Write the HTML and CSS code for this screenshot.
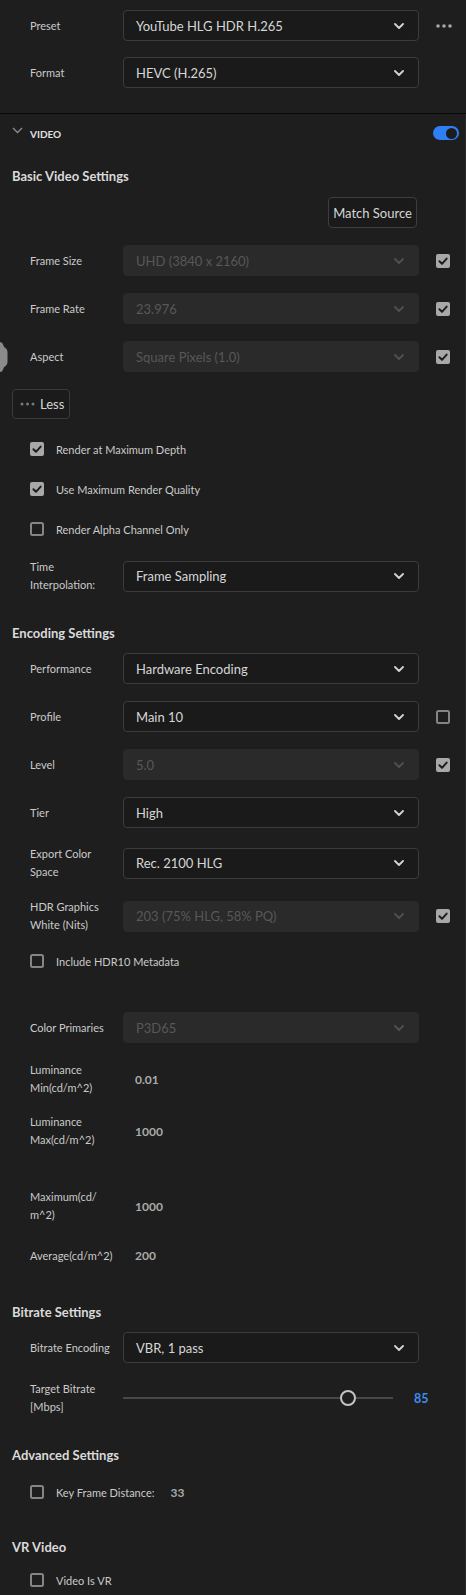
FILE: index.html
```html
<!DOCTYPE html>
<html lang="en">
<head>
<meta charset="utf-8">
<title>Export Settings</title>
<link rel="stylesheet" href="styles.css">
</head>
<body>
<header class="top">
  <div class="row">
    <div class="label">Preset</div>
    <div class="select"><span>YouTube HLG HDR H.265</span><svg class="chev" viewBox="0 0 10 6"><polyline points="1,1 5,5 9,1"/></svg></div>
    <svg class="more" viewBox="0 0 16 4"><circle cx="2" cy="2" r="1.8"/><circle cx="8" cy="2" r="1.8"/><circle cx="14" cy="2" r="1.8"/></svg>
  </div>
  <div class="row">
    <div class="label">Format</div>
    <div class="select"><span>HEVC (H.265)</span><svg class="chev" viewBox="0 0 10 6"><polyline points="1,1 5,5 9,1"/></svg></div>
  </div>
</header>

<main class="panel">
  <div class="section-header">
    <svg class="caret" viewBox="0 0 11 7"><polyline points="1,1 5.5,5.5 10,1"/></svg>
    <span class="section-title">VIDEO</span>
    <span class="toggle"><span class="knob"></span></span>
  </div>

  <h2 class="heading mt-16">Basic Video Settings</h2>
  <div class="btnrow"><button class="btn">Match Source</button></div>

  <div class="group mt-17">
    <div class="row">
      <div class="label">Frame Size</div>
      <div class="select disabled"><span>UHD (3840 x 2160)</span><svg class="chev" viewBox="0 0 10 6"><polyline points="1,1 5,5 9,1"/></svg></div>
      <svg class="cb" viewBox="0 0 14 14"><rect class="cb-fill" width="14" height="14" rx="2"/><path class="cb-tick" d="M3.4 7.3 L6 9.8 L10.7 4.6"/></svg>
    </div>
    <div class="row">
      <div class="label">Frame Rate</div>
      <div class="select disabled"><span>23.976</span><svg class="chev" viewBox="0 0 10 6"><polyline points="1,1 5,5 9,1"/></svg></div>
      <svg class="cb" viewBox="0 0 14 14"><rect class="cb-fill" width="14" height="14" rx="2"/><path class="cb-tick" d="M3.4 7.3 L6 9.8 L10.7 4.6"/></svg>
    </div>
    <div class="row has-handle">
      <svg class="handle" viewBox="0 0 8 30"><path d="M0 0 Q2.5 0 3 2.5 Q3.5 5 6 6.5 Q7.5 7.5 7.5 10 L7.5 20 Q7.5 22.5 6 23.5 Q3.5 25 3 27.5 Q2.5 30 0 30 Z"/></svg>
      <div class="label">Aspect</div>
      <div class="select disabled"><span>Square Pixels (1.0)</span><svg class="chev" viewBox="0 0 10 6"><polyline points="1,1 5,5 9,1"/></svg></div>
      <svg class="cb" viewBox="0 0 14 14"><rect class="cb-fill" width="14" height="14" rx="2"/><path class="cb-tick" d="M3.4 7.3 L6 9.8 L10.7 4.6"/></svg>
    </div>
  </div>

  <button class="less"><svg class="less-dots" viewBox="0 0 15 4"><circle cx="2" cy="2" r="1.5"/><circle cx="7.5" cy="2" r="1.5"/><circle cx="13" cy="2" r="1.5"/></svg>Less</button>

  <div class="checks mt-10">
    <div class="check-row"><svg class="cb" viewBox="0 0 14 14"><rect class="cb-fill" width="14" height="14" rx="2"/><path class="cb-tick" d="M3.4 7.3 L6 9.8 L10.7 4.6"/></svg><span>Render at Maximum Depth</span></div>
    <div class="check-row"><svg class="cb" viewBox="0 0 14 14"><rect class="cb-fill" width="14" height="14" rx="2"/><path class="cb-tick" d="M3.4 7.3 L6 9.8 L10.7 4.6"/></svg><span>Use Maximum Render Quality</span></div>
    <div class="check-row"><svg class="cb" viewBox="0 0 14 14"><rect class="cb-empty" x="1" y="1" width="12" height="12" rx="1.5"/></svg><span>Render Alpha Channel Only</span></div>
  </div>

  <div class="row tall mt-9">
    <div class="label">Time<br>Interpolation:</div>
    <div class="select"><span>Frame Sampling</span><svg class="chev" viewBox="0 0 10 6"><polyline points="1,1 5,5 9,1"/></svg></div>
  </div>

  <h2 class="heading mt-29">Encoding Settings</h2>
  <div class="group mt-10">
    <div class="row">
      <div class="label">Performance</div>
      <div class="select"><span>Hardware Encoding</span><svg class="chev" viewBox="0 0 10 6"><polyline points="1,1 5,5 9,1"/></svg></div>
    </div>
    <div class="row">
      <div class="label">Profile</div>
      <div class="select"><span>Main 10</span><svg class="chev" viewBox="0 0 10 6"><polyline points="1,1 5,5 9,1"/></svg></div>
      <svg class="cb" viewBox="0 0 14 14"><rect class="cb-empty" x="1" y="1" width="12" height="12" rx="1.5"/></svg>
    </div>
    <div class="row">
      <div class="label">Level</div>
      <div class="select disabled"><span>5.0</span><svg class="chev" viewBox="0 0 10 6"><polyline points="1,1 5,5 9,1"/></svg></div>
      <svg class="cb" viewBox="0 0 14 14"><rect class="cb-fill" width="14" height="14" rx="2"/><path class="cb-tick" d="M3.4 7.3 L6 9.8 L10.7 4.6"/></svg>
    </div>
    <div class="row">
      <div class="label">Tier</div>
      <div class="select"><span>High</span><svg class="chev" viewBox="0 0 10 6"><polyline points="1,1 5,5 9,1"/></svg></div>
    </div>
    <div class="row tall">
      <div class="label">Export Color<br>Space</div>
      <div class="select"><span>Rec. 2100 HLG</span><svg class="chev" viewBox="0 0 10 6"><polyline points="1,1 5,5 9,1"/></svg></div>
    </div>
    <div class="row tall">
      <div class="label">HDR Graphics<br>White (Nits)</div>
      <div class="select disabled"><span>203 (75% HLG, 58% PQ)</span><svg class="chev" viewBox="0 0 10 6"><polyline points="1,1 5,5 9,1"/></svg></div>
      <svg class="cb" viewBox="0 0 14 14"><rect class="cb-fill" width="14" height="14" rx="2"/><path class="cb-tick" d="M3.4 7.3 L6 9.8 L10.7 4.6"/></svg>
    </div>
  </div>

  <div class="check-row mt-7"><svg class="cb" viewBox="0 0 14 14"><rect class="cb-empty" x="1" y="1" width="12" height="12" rx="1.5"/></svg><span>Include HDR10 Metadata</span></div>

  <div class="row mt-31">
    <div class="label">Color Primaries</div>
    <div class="select disabled"><span>P3D65</span><svg class="chev" viewBox="0 0 10 6"><polyline points="1,1 5,5 9,1"/></svg></div>
  </div>
  <div class="row tall mt-18">
    <div class="label">Luminance<br>Min(cd/m^2)</div>
    <div class="value">0.01</div>
  </div>
  <div class="row tall mt-16">
    <div class="label">Luminance<br>Max(cd/m^2)</div>
    <div class="value">1000</div>
  </div>
  <div class="row tall mt-39">
    <div class="label">Maximum(cd/<br>m^2)</div>
    <div class="value">1000</div>
  </div>
  <div class="row mt-16">
    <div class="label">Average(cd/m^2)</div>
    <div class="value">200</div>
  </div>

  <h2 class="heading mt-31">Bitrate Settings</h2>
  <div class="row mt-10">
    <div class="label">Bitrate Encoding</div>
    <div class="select"><span>VBR, 1 pass</span><svg class="chev" viewBox="0 0 10 6"><polyline points="1,1 5,5 9,1"/></svg></div>
  </div>
  <div class="row tall mt-17">
    <div class="label">Target Bitrate<br>[Mbps]</div>
    <div class="slider"><div class="track"></div><div class="thumb" style="left: 83.3%"></div></div>
    <div class="slider-value">85</div>
  </div>

  <h2 class="heading mt-29">Advanced Settings</h2>
  <div class="check-row mt-7"><svg class="cb" viewBox="0 0 14 14"><rect class="cb-empty" x="1" y="1" width="12" height="12" rx="1.5"/></svg><span>Key Frame Distance:</span><span class="kf-value">33</span></div>

  <h2 class="heading mt-25">VR Video</h2>
  <div class="check-row mt-3"><svg class="cb" viewBox="0 0 14 14"><rect class="cb-empty" x="1" y="1" width="12" height="12" rx="1.5"/></svg><span>Video Is VR</span></div>
</main>
</body>
</html>
```

FILE: styles.css
```css
* { box-sizing: border-box; }

html, body {
  margin: 0;
  padding: 0;
  background: #1e1e1e;
}

body {
  width: 466px;
  height: 1595px;
  overflow: hidden;
  font-family: Lato, "Liberation Sans", Arial, sans-serif;
  color: #c8c8c8;
}

.top {
  display: flex;
  flex-direction: column;
  gap: 16px;
  padding: 10px 0 25px;
  border-bottom: 1px solid #0a0a0a;
}

.panel {
  border-right: 1px solid #2a2a2a;
  min-height: 1481px;
}

.row {
  display: flex;
  align-items: center;
  height: 31px;
  padding-left: 30px;
  position: relative;
}

.row.tall { height: 36px; }

.label {
  flex: none;
  width: 93px;
  font-size: 11px;
  line-height: 18px;
  white-space: nowrap;
  color: #cacaca;
}

.select {
  flex: none;
  width: 296px;
  height: 31px;
  display: flex;
  align-items: center;
  justify-content: space-between;
  padding: 0 14px 0 12px;
  background: #1a1a1a;
  border: 1px solid #3c3c3c;
  border-radius: 4px;
  font-size: 13px;
  color: #d6d6d6;
}

.select.disabled {
  background: #2a2a2a;
  border-color: #2a2a2a;
  color: #585858;
}

.chev {
  width: 10px;
  height: 6px;
  fill: none;
  stroke: #d4d4d4;
  stroke-width: 1.8;
  stroke-linecap: round;
  stroke-linejoin: round;
}

.select.disabled .chev { stroke: #505050; }

.more {
  width: 16px;
  height: 4px;
  margin-left: 17px;
  fill: #a6a6a6;
}

.cb {
  flex: none;
  width: 14px;
  height: 14px;
}

.row .cb { margin-left: 17px; }

.cb-fill { fill: #a8a8a8; }

.cb-tick {
  fill: none;
  stroke: #1e1e1e;
  stroke-width: 2;
  stroke-linecap: round;
  stroke-linejoin: round;
}

.cb-empty {
  fill: none;
  stroke: #858585;
  stroke-width: 2;
}

.section-header {
  display: flex;
  align-items: center;
  height: 36px;
  padding: 0 6px 0 12px;
}

.caret {
  width: 11px;
  height: 7px;
  fill: none;
  stroke: #8c8c8c;
  stroke-width: 1.3;
  margin-top: -3px;
}

.section-title {
  margin-left: 7px;
  font-size: 10px;
  font-weight: bold;
  color: #e0e0e0;
  margin-top: 3px;
}

.toggle {
  margin-left: auto;
  width: 26px;
  height: 14px;
  border-radius: 7px;
  background: #2d7ff2;
  display: flex;
  align-items: center;
  justify-content: flex-end;
  padding-right: 2px;
  margin-top: 2px;
}

.knob {
  width: 11px;
  height: 11px;
  border-radius: 50%;
  background: #1c1c1c;
}

.heading {
  margin: 0;
  padding-left: 12px;
  font-size: 13px;
  line-height: 20px;
  font-weight: bold;
  color: #dadada;
}

.btnrow {
  display: flex;
  justify-content: flex-end;
  padding-right: 48px;
  margin-top: 11px;
}

.btn {
  height: 31px;
  width: 89px;
  padding: 0;
  background: #1a1a1a;
  border: 1px solid #3e3e3e;
  border-radius: 4px;
  font-family: inherit;
  font-size: 13px;
  color: #d6d6d6;
}

.group {
  display: flex;
  flex-direction: column;
  gap: 17px;
}

.handle {
  position: absolute;
  left: 0;
  top: 1px;
  width: 8px;
  height: 30px;
  fill: #8a8a8a;
}

.less {
  display: flex;
  align-items: center;
  margin: 17px 0 0 12px;
  width: 58px;
  height: 30px;
  padding: 0 0 0 7px;
  background: #1b1b1b;
  border: 1px solid #3a3a3a;
  border-radius: 4px;
  font-family: inherit;
  font-size: 13px;
  color: #d6d6d6;
}

.less-dots {
  width: 15px;
  height: 4px;
  fill: #777;
  margin-right: 5px;
}

.checks {
  display: flex;
  flex-direction: column;
}

.check-row {
  display: flex;
  align-items: center;
  height: 40px;
  padding-left: 30px;
  gap: 12px;
  font-size: 11px;
  color: #cacaca;
}

.kf-value {
  margin-left: 4px;
  font-size: 12px;
  font-weight: bold;
  color: #a8a8a8;
}

.value {
  padding-left: 12px;
  font-size: 12px;
  font-weight: bold;
  color: #aaaaaa;
}

.slider {
  position: relative;
  flex: none;
  width: 270px;
  height: 16px;
  display: flex;
  align-items: center;
}

.track {
  width: 100%;
  height: 2px;
  background: #484848;
}

.thumb {
  position: absolute;
  top: 0;
  width: 16px;
  height: 16px;
  margin-left: -8px;
  border: 2px solid #c4c4c4;
  border-radius: 50%;
  background: #1e1e1e;
}

.slider-value {
  margin-left: 21px;
  font-size: 12.5px;
  font-weight: bold;
  color: #3d8df0;
}

.mt-3 { margin-top: 3px; }
.mt-7 { margin-top: 7px; }
.mt-9 { margin-top: 9px; }
.mt-10 { margin-top: 10px; }
.mt-16 { margin-top: 16px; }
.mt-17 { margin-top: 17px; }
.mt-18 { margin-top: 18px; }
.mt-25 { margin-top: 25px; }
.mt-29 { margin-top: 29px; }
.mt-31 { margin-top: 31px; }
.mt-39 { margin-top: 39px; }
```
